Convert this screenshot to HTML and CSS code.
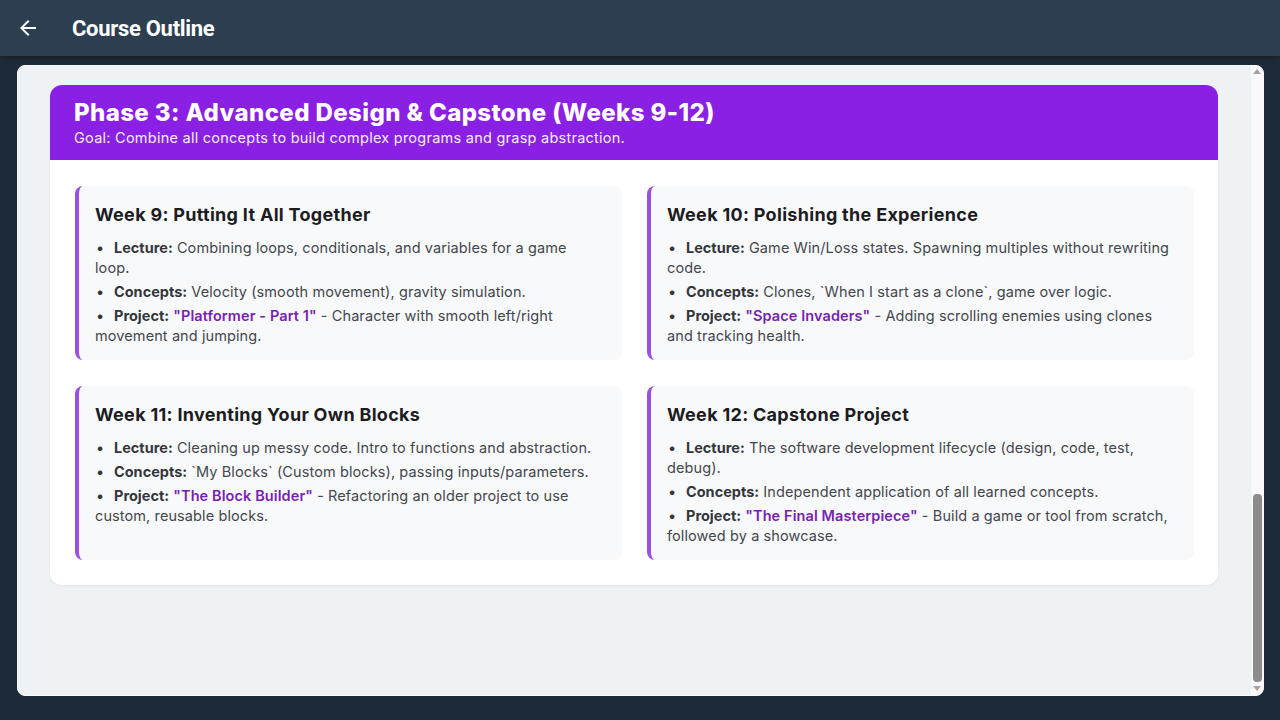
FILE: index.html
```html
<!DOCTYPE html>
<html lang="en">
<head>
<meta charset="utf-8">
<title>Course Outline</title>
<link rel="stylesheet" href="styles.css">
</head>
<body>
<header class="topbar">
  <button class="back" aria-label="Back">
    <svg width="24" height="24" viewBox="0 0 24 24"><path d="M20 11H7.83l5.59-5.59L12 4l-8 8 8 8 1.41-1.41L7.83 13H20v-2z" fill="#fff"/></svg>
  </button>
  <h1 class="topbar-title">Course Outline</h1>
</header>

<main class="panel">
  <div class="panel-content">
    <section class="phase">
      <div class="phase-head">
        <h2 class="phase-title">Phase 3: Advanced Design &amp; Capstone (Weeks 9-12)</h2>
        <p class="phase-goal">Goal: Combine all concepts to build complex programs and grasp abstraction.</p>
      </div>
      <div class="weeks">
        <article class="week">
          <h3 class="week-title">Week 9: Putting It All Together</h3>
          <ul class="items">
            <li><b>Lecture:</b> Combining loops, conditionals, and variables for a game loop.</li>
            <li><b>Concepts:</b> Velocity (smooth movement), gravity simulation.</li>
            <li><b>Project:</b> <span class="proj">"Platformer - Part 1"</span> - Character with smooth left/right movement and jumping.</li>
          </ul>
        </article>
        <article class="week">
          <h3 class="week-title">Week 10: Polishing the Experience</h3>
          <ul class="items">
            <li><b>Lecture:</b> Game Win/Loss states. Spawning multiples without rewriting code.</li>
            <li><b>Concepts:</b> Clones, `When I start as a clone`, game over logic.</li>
            <li><b>Project:</b> <span class="proj">"Space Invaders"</span> - Adding scrolling enemies using clones and tracking health.</li>
          </ul>
        </article>
        <article class="week">
          <h3 class="week-title">Week 11: Inventing Your Own Blocks</h3>
          <ul class="items">
            <li><b>Lecture:</b> Cleaning up messy code. Intro to functions and abstraction.</li>
            <li><b>Concepts:</b> `My Blocks` (Custom blocks), passing inputs/parameters.</li>
            <li><b>Project:</b> <span class="proj">"The Block Builder"</span> - Refactoring an older project to use custom, reusable blocks.</li>
          </ul>
        </article>
        <article class="week">
          <h3 class="week-title">Week 12: Capstone Project</h3>
          <ul class="items">
            <li><b>Lecture:</b> The software development lifecycle (design, code, test, debug).</li>
            <li><b>Concepts:</b> Independent application of all learned concepts.</li>
            <li><b>Project:</b> <span class="proj">"The Final Masterpiece"</span> - Build a game or tool from scratch, followed by a showcase.</li>
          </ul>
        </article>
      </div>
    </section>
  </div>
  <div class="scrollbar" aria-hidden="true">
    <span class="arrow up"></span>
    <div class="track">
      <span class="thumb"></span>
    </div>
    <span class="arrow down"></span>
  </div>
</main>
</body>
</html>
```
FILE: styles.css
```css
* { box-sizing: border-box; }

html, body {
  margin: 0;
  height: 100%;
}

body {
  background: #1d2a37;
  font-family: Inter, "Noto Sans", sans-serif;
  display: flex;
  flex-direction: column;
  overflow: hidden;
}

/* top app bar */
.topbar {
  height: 56px;
  flex: none;
  background: #2c3e50;
  display: flex;
  align-items: center;
  padding-left: 16px;
  box-shadow: 0 2px 4px rgba(0, 0, 0, 0.25);
}

.back {
  border: 0;
  background: none;
  padding: 0;
  width: 24px;
  height: 24px;
  display: flex;
}

.topbar-title {
  margin: 0 0 0 32px;
  font-family: Roboto, "Liberation Sans", sans-serif;
  font-weight: 700;
  font-size: 22px;
  color: #fff;
  letter-spacing: -0.3px;
}

/* scrolling panel */
.panel {
  margin: 9px 16px 24px 17px;
  flex: 1;
  background: #eff2f4;
  border-radius: 8px;
  border: 1px solid #f7f9fa;
  display: flex;
  overflow: hidden;
}

.panel-content {
  flex: 1;
  padding: 19px 33px 0 32px;
}

.scrollbar {
  width: 12px;
  flex: none;
  background: #f9f9fb;
  display: flex;
  flex-direction: column;
  align-items: center;
  padding: 3px 0 4px;
}

.arrow {
  width: 0;
  height: 0;
  border-left: 4px solid transparent;
  border-right: 4px solid transparent;
}

.arrow.up { border-bottom: 5px solid #a3a3a3; }
.arrow.down { border-top: 5px solid #a3a3a3; }

.track {
  flex: 1;
  width: 100%;
  display: flex;
  flex-direction: column;
  justify-content: flex-end;
  align-items: center;
  padding: 0 0 4px;
}

.thumb {
  width: 9px;
  height: 188px;
  border-radius: 4px;
  background: #8c8c8c;
}

/* phase card */
.phase {
  background: #fff;
  border-radius: 12px;
  overflow: hidden;
  box-shadow: 0 1px 3px rgba(0, 0, 0, 0.05);
}

.phase-head {
  background: #8a20e3;
  padding: 13px 24px 13px;
  color: #fff;
}

.phase-title {
  margin: 0;
  font-size: 24px;
  font-weight: 800;
  line-height: 29px;
  letter-spacing: 0.4px;
}

.phase-goal {
  margin: 2px 0 0;
  font-size: 14.5px;
  line-height: 18px;
  letter-spacing: 0.25px;
  color: #f6ecff;
}

.weeks {
  display: grid;
  grid-template-columns: 1fr 1fr;
  gap: 26px 25px;
  padding: 26px 24px 25px 25px;
}

.week {
  background: #f8f9fb;
  border-left: 4px solid #9d4fdd;
  border-radius: 8px;
  padding: 18px 20px 10px 16px;
}

.week-title {
  margin: 0 0 12px;
  font-size: 18px;
  font-weight: 700;
  line-height: 22px;
  letter-spacing: 0.3px;
  color: #1c1c22;
}

.items {
  list-style: none;
  margin: 0;
  padding: 0;
  font-size: 14.5px;
  line-height: 20px;
  letter-spacing: 0.1px;
  color: #44474d;
}

.items li {
  margin-bottom: 4px;
}

.items li::before {
  content: "\2022";
  display: inline-block;
  width: 18px;
  padding-left: 1px;
  color: #333;
}

.items b {
  font-weight: 700;
  letter-spacing: 0;
  color: #33363b;
}

.proj {
  color: #7a1fb0;
  font-weight: 600;
}
```
